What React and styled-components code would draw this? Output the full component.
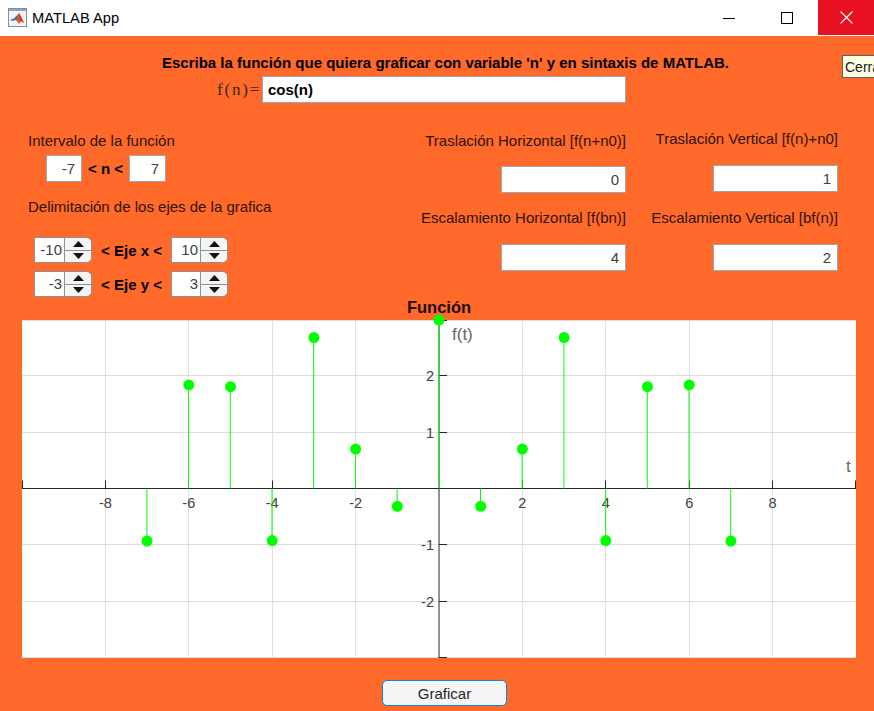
import React from 'react';
import styled, { createGlobalStyle } from 'styled-components';

const ORANGE = '#ff6929';
const FONT = '"Liberation Sans", Arial, sans-serif';

const GlobalStyle = createGlobalStyle`
  html, body {
    margin: 0;
    padding: 0;
    background: ${ORANGE};
  }
  * {
    box-sizing: border-box;
  }
`;

function MatlabIcon() {
  return (
    <svg width="19" height="19" viewBox="0 0 19 19">
      <rect x="0.5" y="0.5" width="18" height="18" fill="#f4f4f4" stroke="#8a8f96" />
      <rect x="1" y="1" width="17" height="2" fill="#7fa8d0" />
      <path d="M2 12l4-1.5 3-3L11 5l2 4 3 6-3-2-2 3-2-3-2-1z" fill="#e2571e" />
      <path d="M2 12l4-1.5 3-3 1 3-3 1.5-2 1z" fill="#3d77b8" />
      <path d="M11 5l2 4 3 6-3-2-1.5-4z" fill="#b5341a" />
    </svg>
  );
}

function TitleBar() {
  return (
    <Bar>
      <AppName>
        <MatlabIcon />
        <span>MATLAB App</span>
      </AppName>
      <WinButton>
        <svg width="12" height="12" viewBox="0 0 12 12">
          <path d="M0 6.5h12" stroke="#000" />
        </svg>
      </WinButton>
      <WinButton>
        <svg width="12" height="12" viewBox="0 0 12 12">
          <rect x="0.5" y="0.5" width="11" height="11" fill="none" stroke="#000" />
        </svg>
      </WinButton>
      <CloseButton>
        <svg width="13" height="13" viewBox="0 0 13 13">
          <path d="M0.5 0.5l12 12M12.5 0.5l-12 12" stroke="#fff" strokeWidth="1.1" />
        </svg>
      </CloseButton>
    </Bar>
  );
}

function Spinner({ value, width }) {
  return (
    <SpinBox $width={width}>
      <SpinValue>{value}</SpinValue>
      <SpinArrows>
        <SpinArrow>
          <svg width="11" height="6" viewBox="0 0 11 6">
            <path d="M5.5 0L11 6H0z" fill="#111" />
          </svg>
        </SpinArrow>
        <SpinArrow>
          <svg width="11" height="6" viewBox="0 0 11 6">
            <path d="M0 0h11L5.5 6z" fill="#111" />
          </svg>
        </SpinArrow>
      </SpinArrows>
    </SpinBox>
  );
}

// plot area: x -10..10, y -3..3
const W = 834;
const H = 338;
const px = (x) => ((x + 10) / 20) * W;
const py = (y) => ((3 - y) / 6) * H;
const snap = (v) => Math.floor(v) + 0.5;
const signal = [];
for (let n = -7; n <= 7; n++) signal.push({ n, y: 2 * Math.cos(4 * n) + 1 });
const xTicks = [-8, -6, -4, -2, 2, 4, 6, 8];
const yTicks = [-2, -1, 1, 2];

function Plot() {
  const x0 = px(0);
  const y0 = 168.5;
  return (
    <PlotSvg width={W} height={H} viewBox={`0 0 ${W} ${H}`}>
      <rect width={W} height={H} fill="#fff" />
      {xTicks.map((t) => (
        <line key={t} x1={snap(px(t))} x2={snap(px(t))} y1="0" y2={H} stroke="#e0e0e0" />
      ))}
      {yTicks.map((t) => (
        <line key={t} x1="0" x2={W} y1={snap(py(t) - 0.5)} y2={snap(py(t) - 0.5)} stroke="#dedede" />
      ))}
      <line x1="0" x2={W} y1="0.5" y2="0.5" stroke="#dedede" />
      <line x1="0" x2={W} y1={H - 0.5} y2={H - 0.5} stroke="#dedede" />

      <line x1="0" x2={W} y1={y0} y2={y0} stroke="#262626" />
      <line x1={x0} x2={x0} y1="0" y2={H} stroke="#262626" />
      {[...xTicks, -10, 10].map((t) => {
        const x = t === 10 ? W - 0.5 : t === -10 ? 0.5 : snap(px(t));
        return <line key={t} x1={x} x2={x} y1={y0} y2={y0 - 8} stroke="#262626" />;
      })}
      {[...yTicks, -3, 3].map((t) => {
        const y = t === -3 ? H - 0.5 : t === 3 ? 0.5 : snap(py(t) - 0.5);
        return <line key={t} x1={x0} x2={x0 + 8} y1={y} y2={y} stroke="#262626" />;
      })}

      {xTicks.map((t) => (
        <AxisText key={t} x={px(t)} y={y0 + 19} textAnchor="middle">
          {t}
        </AxisText>
      ))}
      {yTicks.map((t) => (
        <AxisText key={t} x={x0 - 5} y={py(t) + 5} textAnchor="end">
          {t}
        </AxisText>
      ))}
      <AxisName x="430" y="20">f(t)</AxisName>
      <AxisName x="824" y="152">t</AxisName>

      {signal.map((s) => {
        const x = s.n === 0 ? px(0) : px(s.n) - 0.2;
        return (
          <g key={s.n}>
            <line x1={x} x2={x} y1={y0} y2={py(s.y)} stroke="#00ff00" />
            <circle cx={px(s.n)} cy={py(s.y)} r="5.5" fill="#00ff00" />
          </g>
        );
      })}
    </PlotSvg>
  );
}

export default function App() {
  return (
    <Screen>
      <GlobalStyle />
      <TitleBar />
      <Body>
        <Tooltip>Cerrar</Tooltip>
        <Heading>Escriba la función que quiera graficar con variable 'n' y en sintaxis de MATLAB.</Heading>
        <FunctionRow>
          <Formula>f(n)=</Formula>
          <FunctionInput readOnly value="cos(n)" />
        </FunctionRow>

        <Controls>
          <LeftColumn>
            <Label>Intervalo de la función</Label>
            <RangeRow>
              <NumberInput readOnly value="-7" $width={36} />
              <RangeText>&lt; n &lt;</RangeText>
              <NumberInput readOnly value="7" $width={37} />
            </RangeRow>
            <SectionLabel>Delimitación de los ejes de la grafica</SectionLabel>
            <SpinnerRows>
              <SpinnerRow>
                <Spinner value="-10" width={58} />
                <AxisLabel>&lt; Eje x &lt;</AxisLabel>
                <Spinner value="10" width={57} />
              </SpinnerRow>
              <SpinnerRow>
                <Spinner value="-3" width={58} />
                <AxisLabel>&lt; Eje y &lt;</AxisLabel>
                <Spinner value="3" width={57} />
              </SpinnerRow>
            </SpinnerRows>
          </LeftColumn>

          <RightGrid>
            <FieldColumn>
              <Label>Traslación Horizontal [f(n+n0)]</Label>
              <NumberInput readOnly value="0" $width={125} $top={15} />
              <Label $top={15}>Escalamiento Horizontal [f(bn)]</Label>
              <NumberInput readOnly value="4" $width={125} $top={16} />
            </FieldColumn>
            <FieldColumn $shift={-2}>
              <Label>Traslación Vertical [f(n)+n0]</Label>
              <NumberInput readOnly value="1" $width={125} $top={16} />
              <Label $top={16}>Escalamiento Vertical [bf(n)]</Label>
              <NumberInput readOnly value="2" $width={125} $top={16} />
            </FieldColumn>
          </RightGrid>
        </Controls>

        <PlotTitle>Función</PlotTitle>
        <Plot />
        <PlotButton>Graficar</PlotButton>
      </Body>
    </Screen>
  );
}

const Screen = styled.div`
  width: 874px;
  height: 711px;
  overflow: hidden;
  display: flex;
  flex-direction: column;
  font-family: ${FONT};
  background: ${ORANGE};
`;

const Bar = styled.div`
  height: 36px;
  flex: none;
  display: flex;
  align-items: flex-start;
  background: #fff;
`;

const AppName = styled.div`
  display: flex;
  align-items: center;
  gap: 5px;
  flex: 1;
  height: 35px;
  padding-left: 8px;
  font-size: 14.7px;
  color: #000;
`;

const WinButton = styled.div`
  width: 58px;
  height: 35px;
  display: flex;
  align-items: center;
  justify-content: center;
`;

const CloseButton = styled(WinButton)`
  width: 56px;
  margin-left: 2px;
  background: #e81123;
`;

const Body = styled.div`
  position: relative;
  flex: 1;
  padding-top: 19px;
  display: flex;
  flex-direction: column;
`;

const Tooltip = styled.div`
  position: absolute;
  left: 842px;
  top: 19px;
  width: 60px;
  height: 23px;
  padding: 2px 2px;
  border: 1px solid #5a6468;
  background: #ffffe1;
  font-size: 14px;
  line-height: 18px;
  color: #10202a;
`;

const Heading = styled.div`
  height: 16px;
  line-height: 16px;
  padding-left: 162px;
  font-size: 15px;
  font-weight: bold;
  color: #000;
  white-space: nowrap;
`;

const FunctionRow = styled.div`
  display: flex;
  align-items: center;
  margin-top: 5px;
  padding-left: 217px;
`;

const Formula = styled.span`
  width: 45px;
  font-family: "Liberation Serif", serif;
  font-size: 17px;
  letter-spacing: 1.8px;
  color: #40271a;
`;

const BaseInput = styled.input`
  height: 27px;
  border: 1px solid #a0a6aa;
  background: #fff;
  outline: none;
  font-family: ${FONT};
  font-size: 15px;
  padding: 0 5px;
`;

const FunctionInput = styled(BaseInput)`
  width: 364px;
  font-weight: bold;
  color: #000;
`;

const NumberInput = styled(BaseInput)`
  width: ${(p) => p.$width}px;
  margin-top: ${(p) => p.$top || 0}px;
  text-align: right;
  padding-right: 6px;
  color: #404040;
`;

const Controls = styled.div`
  display: flex;
  justify-content: space-between;
  margin-top: 28px;
  padding: 0 36px 0 28px;
`;

const LeftColumn = styled.div`
  display: flex;
  flex-direction: column;
`;

const Label = styled.div`
  height: 20px;
  line-height: 20px;
  margin-top: ${(p) => p.$top || 0}px;
  font-size: 15px;
  color: #2e1409;
  white-space: nowrap;
`;

const SectionLabel = styled(Label)`
  margin-top: 15px;
`;

const RangeRow = styled.div`
  display: flex;
  align-items: center;
  gap: 6px;
  margin-top: 4px;
  padding-left: 18px;
`;

const RangeText = styled.span`
  font-size: 15px;
  font-weight: bold;
  color: #000;
`;

const SpinnerRows = styled.div`
  display: flex;
  flex-direction: column;
  gap: 8px;
  margin-top: 20px;
  padding-left: 6px;
`;

const SpinnerRow = styled.div`
  display: flex;
  align-items: center;
  height: 26px;
`;

const AxisLabel = styled.span`
  width: 79px;
  text-align: center;
  font-size: 15px;
  font-weight: bold;
  color: #000;
`;

const SpinBox = styled.div`
  display: flex;
  width: ${(p) => p.$width}px;
  height: 26px;
  border: 1px solid #8f9498;
  border-radius: 0 6px 6px 0;
  overflow: hidden;
  background: #fff;
`;

const SpinValue = styled.div`
  flex: 1;
  line-height: 24px;
  text-align: right;
  padding-right: 2px;
  font-size: 15px;
  color: #404040;
`;

const SpinArrows = styled.div`
  width: 27px;
  display: flex;
  flex-direction: column;
  border-left: 1px solid #8f9498;
  background: #f5f5f5;
`;

const SpinArrow = styled.div`
  flex: 1;
  display: flex;
  align-items: center;
  justify-content: center;
  & + & {
    border-top: 1px solid #8f9498;
  }
`;

const RightGrid = styled.div`
  display: grid;
  grid-template-columns: 212px 212px;
`;

const FieldColumn = styled.div`
  display: flex;
  flex-direction: column;
  align-items: flex-end;
  margin-top: ${(p) => p.$shift || 0}px;
`;

const PlotTitle = styled.div`
  width: 834px;
  height: 20px;
  line-height: 20px;
  margin: 0 0 3px 22px;
  text-align: center;
  font-size: 16.5px;
  font-weight: bold;
  color: #1a0f0a;
`;

const PlotSvg = styled.svg`
  display: block;
  flex: none;
  margin-left: 22px;
  overflow: visible;
`;

const AxisText = styled.text`
  font-family: ${FONT};
  font-size: 14.5px;
  fill: #404040;
`;

const AxisName = styled.text`
  font-family: ${FONT};
  font-size: 17px;
  fill: #666;
`;

const PlotButton = styled.button`
  width: 125px;
  height: 26px;
  margin: 22px 0 0 382px;
  padding: 0;
  border: 1px solid #0a84e0;
  border-radius: 5px;
  background: #f5f5f5;
  font-family: ${FONT};
  font-size: 15px;
  color: #262626;
`;
